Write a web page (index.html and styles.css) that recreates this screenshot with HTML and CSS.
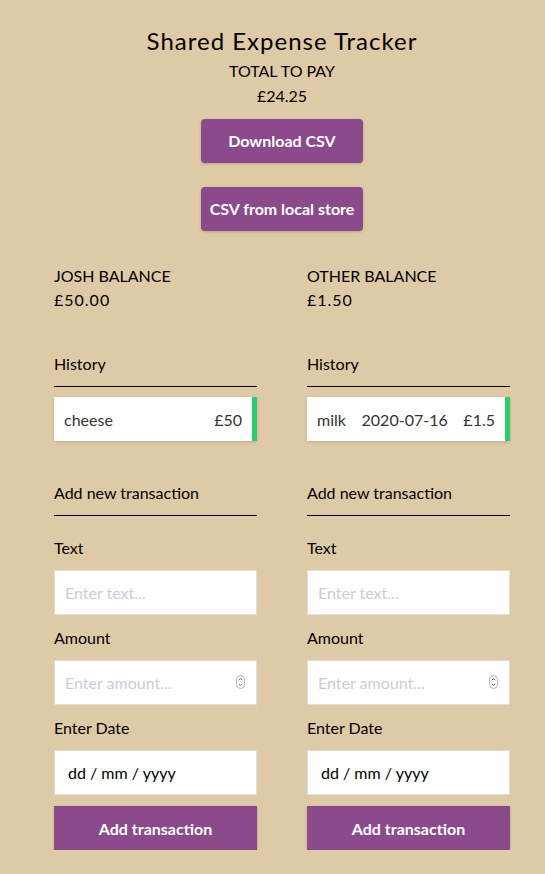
FILE: index.html
```html
<!DOCTYPE html>
<html lang="en">
<head>
<meta charset="utf-8">
<title>Shared Expense Tracker</title>
<link rel="stylesheet" href="styles.css">
</head>
<body>
<main class="app">
  <header class="header">
    <h2 class="title">Shared Expense Tracker</h2>
    <h4 class="total-label">TOTAL TO PAY</h4>
    <div class="total-value">£24.25</div>
    <button class="btn-top">Download CSV</button>
    <button class="btn-top">CSV from local store</button>
  </header>
  <section class="columns">
    <div class="col">
      <h4 class="bal-label">JOSH BALANCE</h4>
      <div class="bal-value">£50.00</div>
      <h3 class="section-title">History</h3>
      <ul class="list">
        <li class="item"><span>cheese</span><span>£50</span></li>
      </ul>
      <h3 class="section-title add">Add new transaction</h3>
      <form class="form">
        <label class="label">Text</label>
        <div class="field"><input class="input" type="text" placeholder="Enter text..."></div>
        <label class="label">Amount</label>
        <div class="field"><input class="input" type="text" placeholder="Enter amount..."><span class="spin"><svg width="9" height="14" viewBox="0 0 9 14"><rect x="0.5" y="0.5" width="8" height="13" rx="4" fill="#fff" stroke="#b5b5b5"/><path d="M2.8 5.2 L4.5 3.6 L6.2 5.2 M2.8 8.8 L4.5 10.4 L6.2 8.8" fill="none" stroke="#555" stroke-width="0.9"/></svg></span></div>
        <label class="label">Enter Date</label>
        <div class="field"><input class="input date" type="text" value="dd / mm / yyyy"></div>
        <button class="btn-add" type="button">Add transaction</button>
      </form>
    </div>
    <div class="col">
      <h4 class="bal-label">OTHER BALANCE</h4>
      <div class="bal-value">£1.50</div>
      <h3 class="section-title">History</h3>
      <ul class="list">
        <li class="item"><span>milk</span><span>2020-07-16</span><span>£1.5</span></li>
      </ul>
      <h3 class="section-title add">Add new transaction</h3>
      <form class="form">
        <label class="label">Text</label>
        <div class="field"><input class="input" type="text" placeholder="Enter text..."></div>
        <label class="label">Amount</label>
        <div class="field"><input class="input" type="text" placeholder="Enter amount..."><span class="spin"><svg width="9" height="14" viewBox="0 0 9 14"><rect x="0.5" y="0.5" width="8" height="13" rx="4" fill="#fff" stroke="#b5b5b5"/><path d="M2.8 5.2 L4.5 3.6 L6.2 5.2 M2.8 8.8 L4.5 10.4 L6.2 8.8" fill="none" stroke="#555" stroke-width="0.9"/></svg></span></div>
        <label class="label">Enter Date</label>
        <div class="field"><input class="input date" type="text" value="dd / mm / yyyy"></div>
        <button class="btn-add" type="button">Add transaction</button>
      </form>
    </div>
  </section>
</main>
</body>
</html>
```

FILE: styles.css
```css
* { box-sizing: border-box; }
html, body { margin: 0; padding: 0; }
body {
  background: #dfcaa8;
  font-family: Lato, "Open Sans", sans-serif;
  color: #000;
  font-size: 16px;
}
.app {
  width: 456px;
  margin-left: 54px;
}
.header {
  display: flex;
  flex-direction: column;
  align-items: center;
  padding-top: 27px;
}
.title {
  margin: 0;
  font-size: 24px;
  font-weight: 400;
  letter-spacing: 1px;
  line-height: 28px;
}
.total-label {
  margin: 4px 0 0;
  font-size: 16px;
  font-weight: 400;
  line-height: 24px;
}
.total-value {
  font-size: 16px;
  line-height: 24px;
  margin-top: 1px;
}
.btn-top {
  width: 162px;
  height: 44px;
  margin-top: 11px;
  padding-bottom: 2px;
  border: none;
  border-radius: 4px;
  background: #8a4a8c;
  color: #fff;
  font-family: Lato, sans-serif;
  font-weight: 700;
  font-size: 16px;
  box-shadow: 0 1px 3px rgba(0,0,0,0.2);
}
.btn-top + .btn-top { margin-top: 24px; }
.columns {
  display: grid;
  grid-template-columns: 203px 203px;
  column-gap: 50px;
  margin-top: 33px;
}
.col {
  display: flex;
  flex-direction: column;
}
.bal-label {
  margin: 0;
  font-size: 16px;
  font-weight: 400;
  line-height: 24px;
}
.bal-value {
  font-size: 16px;
  letter-spacing: 1px;
  line-height: 24px;
}
.section-title {
  margin: 40px 0 0;
  font-size: 16px;
  font-weight: 400;
  line-height: 24px;
  padding-bottom: 10px;
  border-bottom: 1px solid #000;
}
.section-title.add { margin-top: 40px; }
.list {
  list-style: none;
  margin: 10px 0 0;
  padding: 0;
}
.item {
  display: flex;
  justify-content: space-between;
  align-items: center;
  height: 44px;
  padding: 0 10px;
  background: #fff;
  color: #333;
  border-right: 5px solid #2ecc71;
  box-shadow: 0 1px 3px rgba(0,0,0,0.15);
}
.form {
  display: flex;
  flex-direction: column;
  margin: 0;
}
.label {
  display: block;
  line-height: 24px;
  margin-top: 20px;
  margin-bottom: 10px;
}
.field + .label { margin-top: 11px; }
.field { position: relative; }
.input {
  display: block;
  width: 100%;
  height: 45px;
  border: 1px solid #dedede;
  background: #fff;
  padding: 0 10px;
  font-family: Lato, sans-serif;
  font-size: 16px;
  color: #000;
  outline: none;
}
.input::placeholder { color: #c8ced9; }
.input.date { padding-left: 13px; }
.spin {
  position: absolute;
  right: 12px;
  top: 15px;
  display: flex;
}
.btn-add {
  margin-top: 11px;
  height: 44px;
  border: none;
  background: #8a4a8c;
  color: #fff;
  font-family: Lato, sans-serif;
  font-weight: 700;
  font-size: 16px;
  box-shadow: 0 1px 3px rgba(0,0,0,0.2);
}
```
